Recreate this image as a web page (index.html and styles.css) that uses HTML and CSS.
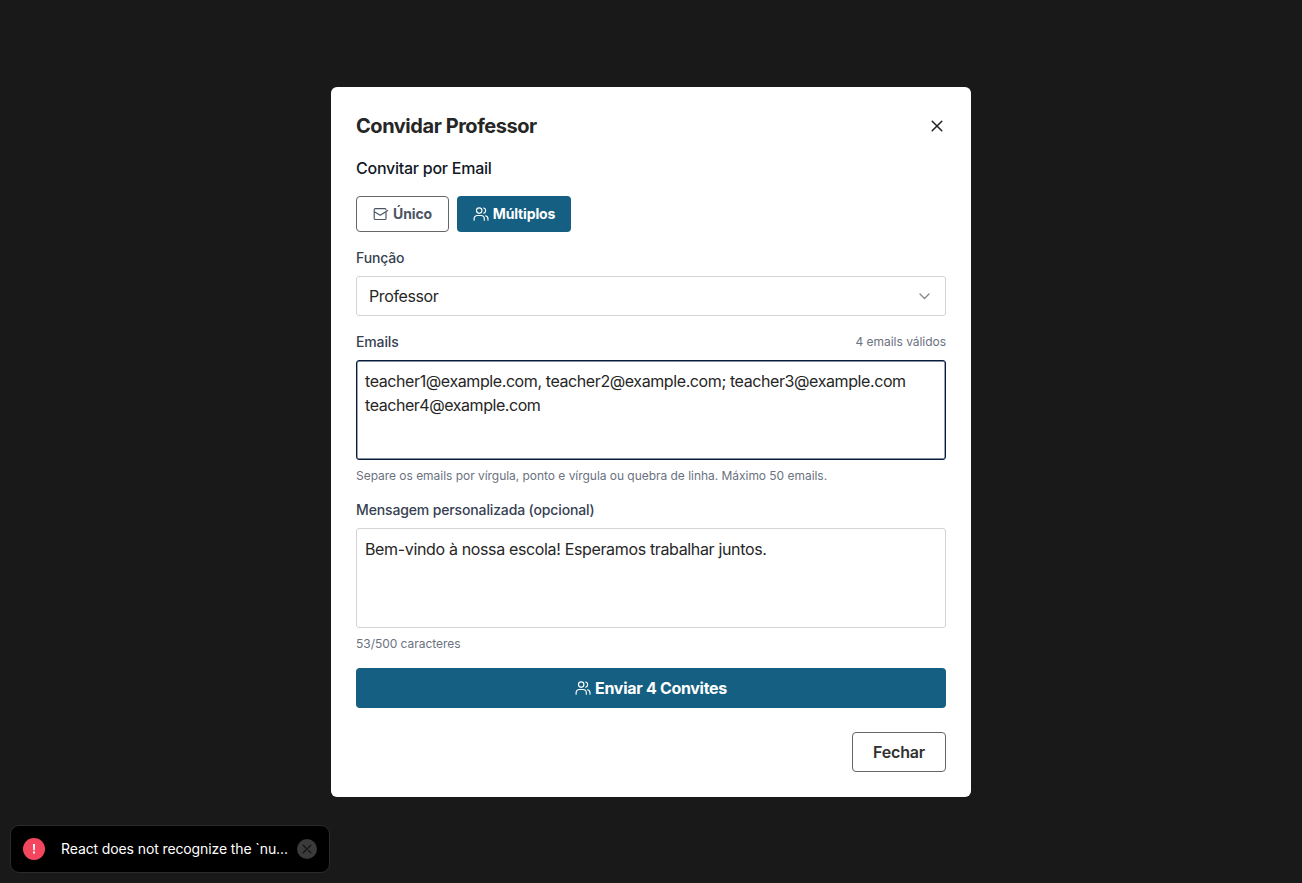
FILE: index.html
```html
<!DOCTYPE html>
<html lang="pt-BR">
<head>
<meta charset="utf-8">
<title>Convidar Professor</title>
<link rel="stylesheet" href="styles.css">
</head>
<body>
<svg class="sprite" aria-hidden="true">
  <symbol id="users" viewBox="0 0 16 16">
    <circle cx="6.2" cy="4.6" r="2.7"/>
    <path d="M1.1 14.2v-1.4a3.3 3.3 0 0 1 3.3-3.3h3.6a3.3 3.3 0 0 1 3.3 3.3v1.4M10.7 2a2.7 2.7 0 0 1 0 5.2M12.6 9.8a3.2 3.2 0 0 1 2.4 3.1v1.3"/>
  </symbol>
</svg>
<div class="overlay">
  <section class="modal" role="dialog" aria-modal="true">
    <header class="modal-header">
      <h2 class="title"><span>Convidar Professor</span></h2>
      <button class="close" aria-label="Fechar janela">
        <svg class="close-icon" viewBox="0 0 18 18"><path d="M4.2 4.2l9.6 9.6M13.8 4.2l-9.6 9.6"/></svg>
      </button>
    </header>
    <h3 class="subtitle"><span>Convitar por Email</span></h3>
    <div class="modes">
      <button class="mode mode-single">
        <svg class="icon" viewBox="0 0 16 16"><path d="M13 6.4v6a1.1 1.1 0 0 1-1.1 1.1H2.3a1.1 1.1 0 0 1-1.1-1.1V3.7a1.1 1.1 0 0 1 1.1-1.1h9.6a1.1 1.1 0 0 1 1.1 1.1M1.4 5.8l5.8 3.4L14.7 4.6"/></svg>
        <span>Único</span>
      </button>
      <button class="mode mode-multi"><svg class="icon"><use href="#users"/></svg><span>Múltiplos</span></button>
    </div>
    <div class="label-row"><label class="label label-role">Função</label></div>
    <div class="select">
      <span>Professor</span>
      <svg class="chevron" viewBox="0 0 16 16"><path d="M3 6l4.5 4.5L12 6"/></svg>
    </div>
    <div class="label-row">
      <label class="label label-emails">Emails</label>
      <span class="note note-valid">4 emails válidos</span>
    </div>
    <div class="area area-focus"><span class="line-a">teacher1@example.com, teacher2@example.com; teacher3@example.com</span><br><span class="line-b">teacher4@example.com</span></div>
    <p class="hint"><span class="note note-hint">Separe os emails por vírgula, ponto e vírgula ou quebra de linha. Máximo 50 emails.</span></p>
    <div class="label-row"><label class="label label-message">Mensagem personalizada (opcional)</label></div>
    <div class="area"><span class="line-c">Bem-vindo à nossa escola! Esperamos trabalhar juntos.</span></div>
    <p class="hint"><span class="note note-count">53/500 caracteres</span></p>
    <button class="submit"><svg class="icon"><use href="#users"/></svg><span>Enviar 4 Convites</span></button>
    <footer class="footer"><button class="dismiss"><span>Fechar</span></button></footer>
  </section>
</div>
<div class="toast">
  <svg class="alert" viewBox="0 0 22 22"><circle cx="11" cy="11" r="11"/><path d="M10 6h2l-.2 6.2h-1.6zM10 13.6h2v2h-2z"/></svg>
  <span class="toast-text">React does not recognize the `nu...</span>
  <svg class="toast-close" viewBox="0 0 20 20"><circle cx="10" cy="10" r="10"/><path d="M6.2 6.2l7.6 7.6M13.8 6.2l-7.6 7.6"/></svg>
</div>
</body>
</html>
```
FILE: styles.css
```css
* { box-sizing: border-box; }
body { margin: 0; height: 883px; overflow: hidden; background: #191919; font-family: Inter, "Liberation Sans", sans-serif; color: #262626; }
h2, h3, p { margin: 0; }
button { font-family: inherit; margin: 0; padding: 0; border: 0; background: none; display: flex; align-items: center; justify-content: center; }
svg { fill: none; stroke: currentColor; display: block; flex: none; stroke-linecap: round; stroke-linejoin: round; }
.sprite { position: absolute; width: 0; height: 0; }
.overlay { height: 883px; display: flex; align-items: center; justify-content: center; }
.modal { width: 640px; height: 710px; padding: 25px; background: #fff; border-radius: 6px; white-space: nowrap; }
.modal-header { display: flex; align-items: center; justify-content: space-between; height: 28px; }
.title { font-size: 20px; line-height: 28px; font-weight: 700; letter-spacing: -0.45px; }
.close { width: 18px; height: 18px; color: #202020; }
.close-icon { width: 18px; height: 18px; stroke-width: 1.5; }
.subtitle { margin-top: 16px; font-size: 16px; line-height: 24px; font-weight: 500; color: #111827; letter-spacing: -0.25px; }
.modes { display: flex; gap: 8px; margin: 16px 0; }
.mode { height: 36px; gap: 4px; border-radius: 4px; font-size: 14px; font-weight: 700; letter-spacing: -0.15px; }
.icon { width: 16px; height: 16px; stroke-width: 1.15; }
.mode-single { width: 93px; border: 1px solid #666; color: #4b5563; }
.mode-multi { width: 114px; background: #155f82; color: #fff; }
.label-row { display: flex; justify-content: space-between; align-items: center; height: 20px; margin-bottom: 8px; }
.label { font-size: 14px; line-height: 20px; font-weight: 500; color: #374151; letter-spacing: -0.14px; }
.note { font-size: 12px; line-height: 16px; color: #6b7280; letter-spacing: -0.035px; }
.select { display: flex; align-items: center; justify-content: space-between; height: 40px; margin-bottom: 16px; padding: 0 12px; border: 1px solid #d4d4d4; border-radius: 3px; font-size: 16px; letter-spacing: -0.38px; }
.chevron { width: 16px; height: 16px; color: #858585; stroke-width: 1.3; }
.area { height: 100px; padding: 8px; border: 1px solid #d4d4d4; border-radius: 3px; font-size: 16px; line-height: 24px; }
.line-a { letter-spacing: -0.405px; }
.line-b { letter-spacing: -0.45px; }
.line-c { letter-spacing: -0.35px; }
.area-focus { border-color: #061b3b; box-shadow: inset 0 0 0 .4px #061b3b; }
.hint { height: 16px; margin: 8px 0 16px; line-height: 16px; font-size: 12px; }
.submit { width: 100%; height: 40px; gap: 4px; border-radius: 4px; background: #155f82; color: #fff; font-size: 16px; font-weight: 700; letter-spacing: -0.3px; }
.footer { display: flex; justify-content: flex-end; margin-top: 24px; }
.dismiss { width: 94px; height: 40px; border: 1px solid #666; border-radius: 4px; font-size: 16px; font-weight: 600; letter-spacing: -0.2px; color: #303030; }
.toast { position: absolute; left: 10px; top: 825px; width: 320px; height: 48px; display: flex; align-items: center; padding: 0 12px; border: 1px solid #2b2b2b; border-radius: 9px; background: #000; color: #fff; font-size: 14px; white-space: nowrap; }
.alert { width: 22px; height: 22px; margin-right: 16px; stroke: none; }
.alert circle { fill: #f4475f; }
.alert path { fill: #fff; }
.toast-text { flex: 1; padding-bottom: 1px; letter-spacing: -0.11px; }
.toast-close { width: 20px; height: 20px; stroke: #151515; stroke-width: 1.3; }
.toast-close circle { fill: #3b3b3b; stroke: none; }
```
